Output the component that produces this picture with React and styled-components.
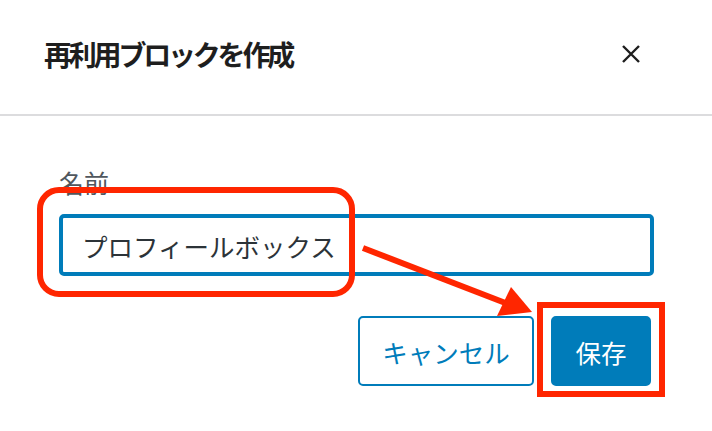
import React from 'react'
import styled, { createGlobalStyle } from 'styled-components';

const GlobalStyle = createGlobalStyle`
  html, body {
    margin: 0;
    padding: 0;
    background: #fff;
  }
  body {
    font-family: "Noto Sans CJK JP", "Noto Sans", sans-serif;
  }
`

const Modal = styled.div`
  position: relative;
  width: 712px;
  height: 431px;
  background: #fff;
  overflow: hidden;
`

const Header = styled.div`
  display: flex;
  justify-content: space-between;
  align-items: center;
  height: 116px;
  padding: 0 57px 6px 44px;
  box-sizing: border-box;
  border-bottom: 2px solid #dcdcde;
`

const Title = styled.h1`
  margin: 0;
  font-size: 28px;
  font-weight: 700;
  letter-spacing: -3.2px;
  color: #1e1e1e;
  line-height: 1;
`

const CloseButton = styled.button`
  display: flex;
  align-items: center;
  justify-content: center;
  width: 48px;
  height: 48px;
  padding: 0;
  border: none;
  background: none;
  color: #1e1e1e;
  cursor: pointer;
`

const Body = styled.div`
  padding: 48px 58px 0 59px;
`

const Label = styled.label`
  display: block;
  font-size: 25px;
  line-height: 36px;
  color: #50575e;
  margin-bottom: 14px;
`

const Input = styled.input`
  display: block;
  width: 100%;
  height: 62px;
  box-sizing: border-box;
  padding: 0 19px;
  border: 4px solid #007cba;
  border-radius: 5px;
  font-family: inherit;
  font-size: 25.5px;
  color: #2c3338;
  outline: none;
`

const Actions = styled.div`
  display: flex;
  justify-content: flex-end;
  gap: 17px;
  margin-top: 40px;
  margin-right: 3px;
`

const Button = styled.button`
  height: 70px;
  width: ${p => p.$width}px;
  box-sizing: border-box;
  border-radius: 5px;
  font-family: inherit;
  font-size: 25.5px;
  cursor: pointer;
  border: 2px solid #007cba;
  background: ${p => (p.$primary ? '#007cba' : '#fff')};
  color: ${p => (p.$primary ? '#fff' : '#007cba')};
`

const Annotations = styled.svg`
  position: absolute;
  left: 0;
  top: 0;
  pointer-events: none;
`

const RED = '#ff2600'

const App = () => {
  return (
    <>
      <GlobalStyle />
      <Modal>
        <Header>
          <Title>再利用ブロックを作成</Title>
          <CloseButton aria-label="閉じる">
            <svg width="20" height="20" viewBox="0 0 20 20">
              <path d="M2 2 L18 18 M18 2 L2 18" stroke="currentColor" strokeWidth="2.4" />
            </svg>
          </CloseButton>
        </Header>
        <Body>
          <Label htmlFor="name">名前</Label>
          <Input id="name" defaultValue="プロフィールボックス" />
          <Actions>
            <Button $width={176}>キャンセル</Button>
            <Button $width={100} $primary>保存</Button>
          </Actions>
        </Body>
        <Annotations width="712" height="431" viewBox="0 0 712 431">
          <rect x="40" y="190" width="312" height="104" rx="19" fill="none" stroke={RED} strokeWidth="6" />
          <rect x="540" y="305" width="122" height="89" fill="none" stroke={RED} strokeWidth="6" />
          <line x1="363" y1="248" x2="508" y2="304" stroke={RED} strokeWidth="6" />
          <polygon points="511,287 497,316 532,312" fill={RED} />
        </Annotations>
      </Modal>
    </>
  );
};

export default App
